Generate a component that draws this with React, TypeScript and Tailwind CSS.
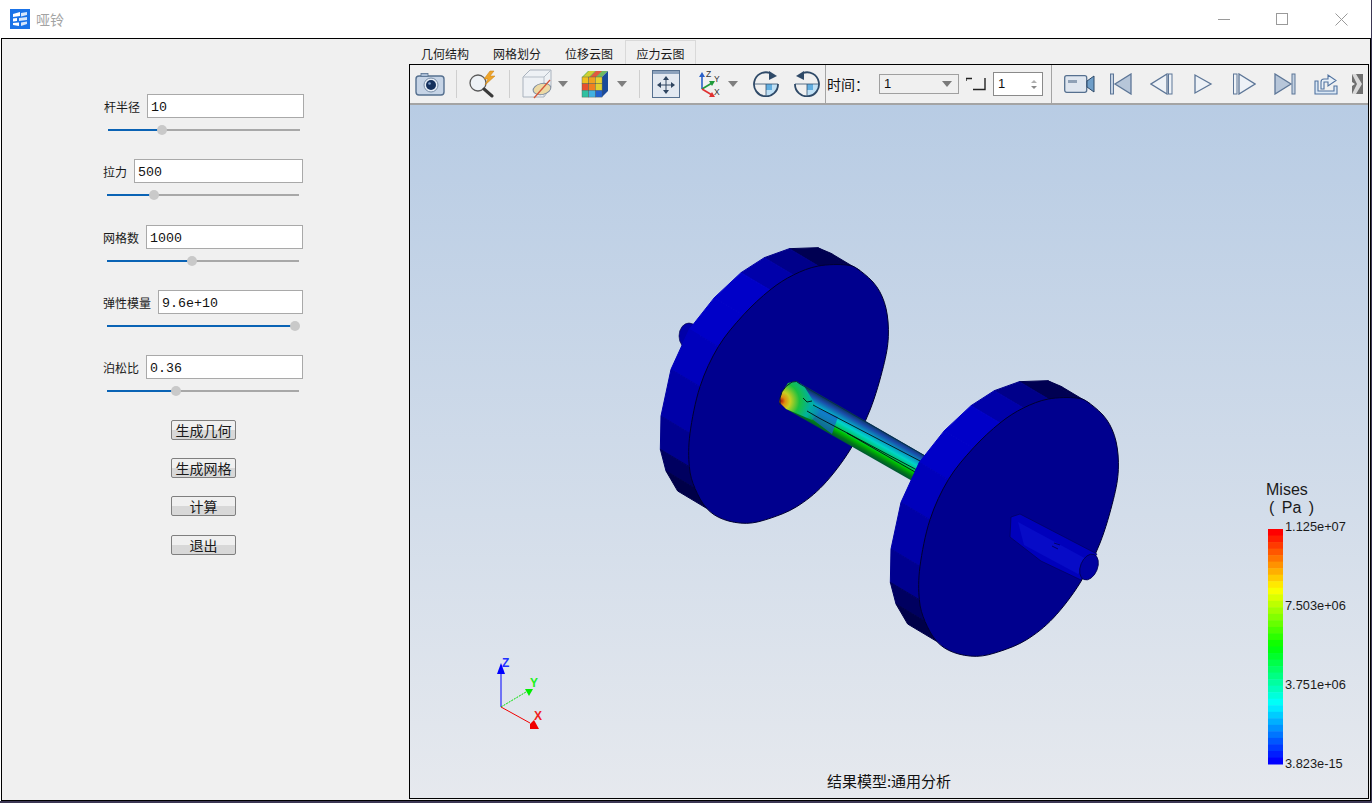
import React from "react";

const cjk = "font-['Noto_Sans_CJK_SC','Liberation_Sans',sans-serif]";

// page coords from the 3x crop of the left disc
const px = ([x, y]: number[], dx = 0, dy = 0) => [650 + x / 3 + dx, 240 + y / 3 + dy];
const z = (pts: number[][], dx = 0, dy = 0) => pts.map((p) => px(p, dx, dy).join(",")).join(" ");

// closed catmull-rom through the points, the face is rounder than its coarse outline
const smooth = (pts: number[][], dx = 0, dy = 0) => {
  const p = pts.map((q) => px(q, dx, dy));
  const n = p.length;
  let d = `M${p[0][0]} ${p[0][1]}`;
  for (let i = 0; i < n; i++) {
    const a = p[(i - 1 + n) % n];
    const b = p[i];
    const c = p[(i + 1) % n];
    const e = p[(i + 2) % n];
    d += ` C${b[0] + (c[0] - a[0]) / 6} ${b[1] + (c[1] - a[1]) / 6} ${c[0] - (e[0] - b[0]) / 6} ${c[1] - (e[1] - b[1]) / 6} ${c[0]} ${c[1]}`;
  }
  return d + "Z";
};

const front = [
  [630, 92], [680, 140], [708, 205], [715, 290], [700, 380], [660, 510], [600, 630], [520, 735],
  [440, 800], [360, 835], [290, 850], [220, 838], [170, 805], [135, 745], [118, 680], [120, 580],
  [150, 440], [205, 320], [280, 225], [360, 150], [430, 105], [505, 78], [590, 75],
];
const rim = [
  [630, 92], [590, 75], [505, 78], [430, 105], [360, 150], [280, 225], [205, 320], [150, 440],
  [120, 580], [118, 680], [135, 745], [170, 805],
];
const rimColors = [
  "#00004c", "#000052", "#00008a", "#0000aa", "#0000c8", "#0000c8", "#0000bc", "#0000a8", "#000090",
  "#000060", "#000048",
];

function Disc({ dx = 0, dy = 0 }: { dx?: number; dy?: number }) {
  return (
    <g>
      {rimColors.map((c, i) => {
        const a = rim[i];
        const b = rim[i + 1];
        const quad = [a, b, [b[0] - 87, b[1] - 52], [a[0] - 87, a[1] - 52]];
        return <polygon key={i} points={z(quad, dx, dy)} fill={c} stroke={c} strokeWidth="1" />;
      })}
      <path d={smooth(front, dx, dy)} fill="#00008e" stroke="#000030" strokeWidth="1" />
    </g>
  );
}

function jet(t: number) {
  // t 0 = red at the top, 1 = blue at the bottom
  const stops = [[255, 0, 0], [255, 255, 0], [0, 255, 0], [0, 255, 255], [0, 0, 255]];
  const p = Math.min(t * 4, 3.999);
  const i = Math.floor(p);
  const f = p - i;
  const c = stops[i].map((v, k) => Math.round(v + (stops[i + 1][k] - v) * f));
  return `rgb(${c[0]},${c[1]},${c[2]})`;
}

function Scene() {
  const bands = Array.from({ length: 36 }, (_, i) => i);
  return (
    <svg viewBox="410 105 958 693" className="absolute inset-0 h-full w-full">
      <defs>
        <linearGradient id="shaft" gradientUnits="userSpaceOnUse" x1="860" y1="418" x2="846" y2="443">
          <stop offset="0" stopColor="#0b3560" />
          <stop offset="0.14" stopColor="#1a4aa8" />
          <stop offset="0.34" stopColor="#08a0c4" />
          <stop offset="0.48" stopColor="#00d4c8" />
          <stop offset="0.62" stopColor="#00c880" />
          <stop offset="0.76" stopColor="#00c000" />
          <stop offset="0.9" stopColor="#007a18" />
          <stop offset="1" stopColor="#005a30" />
        </linearGradient>
        <radialGradient id="hot" gradientUnits="userSpaceOnUse" cx="781" cy="401" r="42">
          <stop offset="0" stopColor="#b01808" />
          <stop offset="0.1" stopColor="#e09010" />
          <stop offset="0.22" stopColor="#c8d020" />
          <stop offset="0.44" stopColor="#18c040" />
          <stop offset="0.7" stopColor="#00b0a0" />
          <stop offset="1" stopColor="#00b0a0" stopOpacity="0" />
        </radialGradient>
      </defs>

      {/* back stub of the left disc */}
      <ellipse cx="689" cy="336" rx="10" ry="13" fill="#0000a8" stroke="#000040" strokeWidth="0.6" />
      <Disc />

      {/* shaft */}
      <polygon points="800,383 926,456 914,482 786,409" fill="url(#shaft)" />
      <polygon points="806,403 838,417 832,434 812,419" fill="#1560c8" opacity="0.75" />
      <polygon points="782,392 788,383 796,381 804,386 820,412 812,420 786,409 779,402" fill="url(#hot)" />
      <path d="M780 405 Q778 390 792 382 Q797 380 800 384" fill="none" stroke="#02202a" strokeWidth="1" />
      <path d="M800 384 L925 456" fill="none" stroke="#04304a" strokeWidth="1" />
      <g fill="none" stroke="#000" strokeWidth="0.8">
        <path d="M803 398 L807 402 L812 401" />
        <path d="M813 405 L922 462" />
        <path d="M807 411 L819 418 L917 470" />
        <path d="M847 433 L915 472" />
      </g>

      <Disc dx={230} dy={133} />

      {/* stub on the right disc */}
      <polygon points="1011,517 1020,514 1097,554 1081,580 1041,561 1010,537" fill="#0000bc" stroke="#000050" strokeWidth="0.6" />
      <polygon points="1018,522 1090,561 1078,574 1024,545" fill="#0a10cc" opacity="0.7" />
      <path d="M1052 546 L1058 549 M1054 543 L1060 545" stroke="#000050" strokeWidth="0.8" />
      <ellipse cx="1089" cy="567" rx="8.5" ry="13.5" transform="rotate(22 1089 567)" fill="#0000a0" stroke="#000050" strokeWidth="0.8" />

      {/* axis triad */}
      <line x1="501" y1="707" x2="501" y2="672" stroke="#0000ff" strokeWidth="1" />
      <polygon points="501,663 505,674 497,674" fill="#0000ff" />
      <line x1="501" y1="707" x2="526" y2="692" stroke="#00e000" strokeWidth="1" strokeDasharray="2 1" />
      <polygon points="525,689 533,689 529,696" fill="#00ee00" />
      <line x1="501" y1="707" x2="530" y2="723" stroke="#f00000" strokeWidth="1" />
      <polygon points="530,724 534,720 539,729 530,729" fill="#f00000" />
      <g className="font-['Liberation_Sans',sans-serif]" fontSize="12" fontWeight="700">
        <text x="502" y="667" fill="#2030ff">Z</text>
        <text x="530" y="687" fill="#20f020">Y</text>
        <text x="534" y="720" fill="#f02020">X</text>
      </g>

      {/* legend */}
      {bands.map((i) => (
        <rect key={i} x="1268" y={529 + (i * 235) / 36} width="15" height={235 / 36 + 0.5} fill={jet(i / 35)} />
      ))}
      <g className="font-['Liberation_Sans',sans-serif]" fill="#1a1a1a">
        <text x="1266" y="495" fontSize="16">Mises</text>
        <text x="1269" y="513" fontSize="16" wordSpacing="3">( Pa )</text>
        <g fontSize="12.8">
          <text x="1285" y="531">1.125e+07</text>
          <text x="1285" y="610">7.503e+06</text>
          <text x="1285" y="689">3.751e+06</text>
          <text x="1285" y="768">3.823e-15</text>
        </g>
      </g>
    </svg>
  );
}

function Param({ label, value, pct, shift }: { label: string; value: string; pct: number; shift?: boolean }) {
  return (
    <div className={shift ? "ml-[102px] w-[200px]" : "ml-[101px] w-[200px]"}>
      <div className="flex h-6 items-center">
        <span className={`${cjk} pt-px text-[12px] text-[#1a1a1a]`}>{label}</span>
        <input
          readOnly
          value={value}
          className="ml-[7px] h-6 min-w-0 flex-1 border border-[#a9a9a9] bg-white pl-[3px] pt-[2px] font-['Liberation_Mono',monospace] text-[13.3px] text-[#111] outline-none"
        />
      </div>
      <div className="relative ml-[4px] flex h-6 w-[192px] items-center">
        <div className="h-[2px] w-full bg-[#a8a8a8]" />
        <div className="absolute left-0 h-[2px] bg-[#0a63b5]" style={{ width: `${pct}%` }} />
        <div
          className="absolute h-[10px] w-[10px] -translate-x-1/2 rounded-full bg-[#c9c9c9]"
          style={{ left: `${pct}%` }}
        />
      </div>
    </div>
  );
}

function PushButton({ label }: { label: string }) {
  return (
    <button
      className={`${cjk} h-5 w-[65px] rounded-[2px] border border-[#7f7f7f] bg-linear-to-b from-[#f0f0f0] from-50% to-[#d8d8d8] to-50% text-[14px] leading-[18px] text-[#1a1a1a]`}
    >
      {label}
    </button>
  );
}

function Sep() {
  return <div className="h-7 w-px bg-[#cfcfcf]" />;
}

function Drop({ className }: { className: string }) {
  return (
    <svg width="10" height="6" viewBox="0 0 10 6" className={className}>
      <polygon points="0,0 10,0 5,6" fill="#7f7f7f" />
    </svg>
  );
}

const blue = "#56708f";

function CameraIcon() {
  return (
    <svg width="30" height="26" viewBox="0 0 30 26">
      <rect x="1" y="5" width="28" height="19" rx="3" fill="#c6d4e6" stroke={blue} strokeWidth="1.4" />
      <rect x="6" y="2.5" width="7" height="3" fill="#a9bcd4" stroke={blue} strokeWidth="0.8" />
      <circle cx="16" cy="14" r="7" fill="#e6edf6" stroke="#7a8fa8" strokeWidth="1" />
      <circle cx="16" cy="14" r="5" fill="#14305c" />
      <circle cx="14.5" cy="12.5" r="1.3" fill="#7e9cc8" />
    </svg>
  );
}

function ZoomBoltIcon() {
  return (
    <svg width="30" height="28" viewBox="0 0 30 28">
      <circle cx="11" cy="13" r="8" fill="#eef2f6" stroke="#5a5a5a" strokeWidth="1.3" />
      <line x1="17" y1="19" x2="25" y2="26" stroke="#3a3a3a" strokeWidth="3" strokeLinecap="round" />
      <polygon points="23,1 17,9 21,9 18,15 28,6 23,6 27,1" fill="#efa52a" stroke="#c57c10" strokeWidth="0.5" />
    </svg>
  );
}

function BoxIcon() {
  return (
    <svg width="30" height="30" viewBox="0 0 30 30">
      <polygon points="1,8 8,1 29,1 29,18 22,28 1,28" fill="#eef1f5" stroke="#a9b2bd" strokeWidth="1" />
      <path d="M1 8 H22 V28 M22 8 L29 1" fill="none" stroke="#b5bdc7" strokeWidth="1" />
      <ellipse cx="20" cy="20" rx="9" ry="5.5" transform="rotate(-12 20 20)" fill="#ecd9a4" stroke="#7a8aa0" strokeWidth="1" />
      <line x1="12" y1="29" x2="28" y2="11" stroke="#d5553a" strokeWidth="1.3" />
    </svg>
  );
}

function CubeIcon() {
  const cells = ["#f0c020", "#f0a020", "#e8d030", "#e85030", "#f08020", "#e0d030", "#30c0a0", "#40b0e0", "#2060d0"];
  return (
    <svg width="28" height="28" viewBox="0 0 28 28">
      <polygon points="1,7 7,1 27,1 21,7" fill="#6fb860" />
      <polygon points="8,1 14,1 8,7 2,7" fill="#d0d030" />
      <polygon points="15,1 21,1 15,7 9,7" fill="#e05a40" />
      <polygon points="21,7 27,1 27,21 21,27" fill="#1a4a9a" />
      {cells.map((c, i) => (
        <rect key={i} x={1 + (i % 3) * 6.7} y={7 + Math.floor(i / 3) * 6.7} width="6.7" height="6.7" fill={c} stroke="#4a5a50" strokeWidth="0.4" />
      ))}
    </svg>
  );
}

function FitIcon() {
  return (
    <svg width="28" height="28" viewBox="0 0 28 28">
      <rect x="0.5" y="0.5" width="27" height="27" fill="#e3e9f1" stroke={blue} strokeWidth="1" />
      <rect x="1" y="1" width="26" height="3" fill="#8ca2bd" />
      <path d="M14 8 V22 M7 15 H21" stroke="#2f4560" strokeWidth="1" />
      <g fill="#2f4560">
        <polygon points="14,6 11,10 17,10" />
        <polygon points="14,24 11,20 17,20" />
        <polygon points="5,15 9,12 9,18" />
        <polygon points="23,15 19,12 19,18" />
      </g>
    </svg>
  );
}

function AxesIcon() {
  return (
    <svg width="24" height="30" viewBox="0 0 24 30" className="font-['Liberation_Sans',sans-serif]">
      <line x1="5" y1="20" x2="5" y2="7" stroke="#2a60c8" strokeWidth="1.6" />
      <polygon points="5,3 2,8 8,8" fill="#2a60c8" />
      <line x1="5" y1="20" x2="15" y2="14" stroke="#1f9a3a" strokeWidth="1.6" />
      <polygon points="18,12 12,12 15,17" fill="#1f9a3a" />
      <line x1="5" y1="20" x2="15" y2="26" stroke="#e03030" strokeWidth="1.6" />
      <polygon points="18,28 12,28 15,23" fill="#e03030" />
      <text x="9" y="8" fontSize="8.5" fill="#333">Z</text>
      <text x="17" y="13" fontSize="8.5" fill="#333">Y</text>
      <text x="17" y="26" fontSize="8.5" fill="#333">X</text>
    </svg>
  );
}

// the blue quadrant stays lower right, only the arrow direction changes
function RotateIcon({ flip }: { flip?: boolean }) {
  return (
    <svg width="26" height="26" viewBox="0 0 26 26">
      <path d="M13 13 H25 A12 12 0 0 1 13 25 Z" fill="#bfe0f5" />
      <path d="M13 13 H19 V19 H13 Z" fill="#62aee0" />
      <path d="M1 13 H25 M13 13 V25" stroke="#33506e" strokeWidth="0.8" fill="none" />
      <g transform={flip ? "translate(26 0) scale(-1 1)" : undefined}>
        <path d="M25 13 A12 12 0 1 1 17 2" fill="none" stroke="#2f4a68" strokeWidth="1.8" />
        <polygon points="16,0 24,5 16,9" fill="#2f4a68" />
      </g>
    </svg>
  );
}

function CornerIcon() {
  return (
    <svg width="20" height="14" viewBox="0 0 20 14">
      <path d="M0 1.5 H6 M0 1 V4 M19 1 V12.5 H7" fill="none" stroke="#222" strokeWidth="1.4" />
    </svg>
  );
}

function VideoIcon() {
  return (
    <svg width="31" height="20" viewBox="0 0 31 20">
      <rect x="0.7" y="1.7" width="22" height="16.6" rx="2" fill="#dfe6ef" stroke={blue} strokeWidth="1.3" />
      <rect x="4" y="6" width="9" height="3" fill="#8fa1b6" />
      <polygon points="23,7 30,2 30,18 23,13" fill="#6f9ec8" stroke="#2f4a68" strokeWidth="1" />
    </svg>
  );
}

function NavIcon({ kind }: { kind: "first" | "prev" | "play" | "next" | "last" }) {
  const line = "#5d7697";
  const fill = kind === "first" || kind === "last" ? "#b7c6d9" : "#eef2f7";
  return (
    <svg width="24" height="22" viewBox="0 0 24 22">
      {kind === "first" && (
        <>
          <rect x="1.5" y="1" width="3" height="20" fill="#c5d2e2" stroke={line} />
          <polygon points="22,1 22,21 6,11" fill={fill} stroke={line} strokeWidth="1.3" />
        </>
      )}
      {kind === "prev" && (
        <>
          <rect x="18.5" y="1" width="3.5" height="20" fill="#eef2f7" stroke={line} />
          <polygon points="17,1 17,21 1,11" fill={fill} stroke={line} strokeWidth="1.3" />
        </>
      )}
      {kind === "play" && <polygon points="4,2 4,20 20,11" fill={fill} stroke={line} strokeWidth="1.3" />}
      {kind === "next" && (
        <>
          <rect x="1.5" y="1" width="3.5" height="20" fill="#eef2f7" stroke={line} />
          <polygon points="7,1 7,21 23,11" fill={fill} stroke={line} strokeWidth="1.3" />
        </>
      )}
      {kind === "last" && (
        <>
          <polygon points="2,1 2,21 18,11" fill={fill} stroke={line} strokeWidth="1.3" />
          <rect x="19" y="1" width="3" height="20" fill="#c5d2e2" stroke={line} />
        </>
      )}
    </svg>
  );
}

function ExportIcon() {
  return (
    <svg width="24" height="22" viewBox="0 0 24 22">
      <path d="M1 8 H4 V18 H20 V13 H23 V21 H1 Z" fill="#dbe8f5" stroke="#5173a0" strokeWidth="1.1" />
      <path d="M7 16 V9 Q7 6 10 6 H14 V2 L22 7.5 L14 13 V9 H10 V16 Z" fill="#e8f0f8" stroke="#5173a0" strokeWidth="1.1" />
    </svg>
  );
}

function MoreIcon() {
  return (
    <svg width="11" height="20" viewBox="0 0 11 20">
      <rect width="11" height="20" fill="#6f6f6f" />
      <polygon points="0,0 4,0 10,10 4,20 0,20 5,10" fill="#d9d9d9" />
      <polygon points="0,8 3,10 0,12" fill="#f0f0f0" />
    </svg>
  );
}

export default function App() {
  const tabs = ["几何结构", "网格划分", "位移云图"];
  return (
    <div className="h-[803px] w-[1372px] overflow-hidden bg-[#3b3654]">
      <div className="flex h-[801px] w-[1371px] flex-col bg-white pl-px">
        {/* title bar */}
        <div className="flex h-[38px] items-center pl-[9px]">
          <svg width="20" height="20" viewBox="0 0 20 20">
            <rect width="20" height="20" fill="#1a73e8" />
            <path d="M3 5 L10 3 V7 L3 8 Z M3 9.5 L7 9 V12 L3 12.5 Z M3 14 L9 13.5 V17 L3 16 Z" fill="#fff" />
            <path d="M11 4 L17 3 V6 L11 7.5 Z M9 9 L17 8 V11 L9 12 Z M11 13.5 L17 12.5 V15 L11 17 Z" fill="#d6e6fb" />
          </svg>
          <span className={`${cjk} ml-[6px] text-[14px] text-[#a3a3a3]`}>哑铃</span>
          <div className="ml-auto flex items-center pr-[23px]">
            <div className="h-px w-3 bg-[#9a9a9a]" />
            <div className="ml-[46px] h-3 w-3 border border-[#9a9a9a]" />
            <svg width="13" height="13" viewBox="0 0 13 13" className="ml-[47px]">
              <path d="M0.5 0.5 L12.5 12.5 M12.5 0.5 L0.5 12.5" stroke="#9a9a9a" strokeWidth="1" />
            </svg>
          </div>
        </div>

        {/* body */}
        <div className="flex min-h-0 flex-1 border border-black bg-[#f0f0f0]">
          <div className="w-[407px] shrink-0 pt-[55px]">
            <div className="flex flex-col gap-[17px]">
              <Param label="杆半径" value="10" pct={28} shift />
              <Param label="拉力" value="500" pct={24.5} />
              <div className="mt-px">
                <Param label="网格数" value="1000" pct={44.5} />
              </div>
              <Param label="弹性模量" value="9.6e+10" pct={98} />
              <Param label="泊松比" value="0.36" pct={36} />
            </div>
            <div className="mt-[17px] flex w-[403px] flex-col items-center gap-[18px]">
              <PushButton label="生成几何" />
              <PushButton label="生成网格" />
              <PushButton label="计算" />
              <div className="mt-px flex">
                <PushButton label="退出" />
              </div>
            </div>
          </div>

          <div className="flex min-w-0 flex-1 flex-col pb-[1px] pr-[1px]">
            {/* tabs */}
            <div className={`${cjk} flex h-[25px] text-[12px] text-[#1a1a1a]`}>
              {tabs.map((t) => (
                <div key={t} className="flex w-[72px] items-center justify-center pt-[4px]">
                  {t}
                </div>
              ))}
              <div className="mt-px flex w-[71px] items-center justify-center border border-b-0 border-[#d9d9d9] bg-[#f0f0f0] pt-[3px]">
                应力云图
              </div>
            </div>

            {/* viewer */}
            <div className="flex min-h-0 flex-1 flex-col border border-black">
              <div className="flex h-[40px] shrink-0 items-center border-b-2 border-[#a4a4a4] bg-[#f0f0f0]">
                <div className="ml-[5px] flex items-center">
                  <CameraIcon />
                  <div className="ml-[11px]"><Sep /></div>
                  <div className="ml-[10px]"><ZoomBoltIcon /></div>
                  <div className="ml-[12px]"><Sep /></div>
                  <div className="ml-[12px]"><BoxIcon /></div>
                  <Drop className="ml-[6px]" />
                  <div className="ml-[13px]"><CubeIcon /></div>
                  <Drop className="ml-[8px]" />
                  <div className="ml-[12px]"><Sep /></div>
                  <div className="ml-[12px]"><FitIcon /></div>
                  <div className="ml-[17px]"><AxesIcon /></div>
                  <Drop className="ml-[7px]" />
                  <div className="ml-[15px]"><RotateIcon /></div>
                  <div className="ml-[15px]"><RotateIcon flip /></div>
                </div>
                <div className="ml-[5px] h-full w-px bg-[#a4a4a4]" />
                <span className={`${cjk} ml-[1px] w-[52px] text-[14px] text-[#111]`}>时间：</span>
                <div className="flex h-5 w-20 items-center justify-between border border-[#a0a0a0] px-[4px] font-['Liberation_Sans',sans-serif] text-[13px] text-[#111]">
                  1
                  <svg width="10" height="6" viewBox="0 0 10 6" className="mr-[2px]">
                    <polygon points="0,0 10,0 5,6" fill="#7a7a7a" />
                  </svg>
                </div>
                <div className="ml-[7px]"><CornerIcon /></div>
                <div className="ml-[7px] flex h-6 w-[50px] items-center justify-between border border-[#8a8a8a] bg-white px-[4px] font-['Liberation_Sans',sans-serif] text-[13px] text-[#111]">
                  1
                  <div className="flex flex-col gap-[3px] pr-[1px]">
                    <div className="h-0 w-0 border-x-[3px] border-b-[3px] border-x-transparent border-b-[#b0b0b0]" />
                    <div className="h-0 w-0 border-x-[3px] border-t-[3px] border-x-transparent border-t-[#8a8a8a]" />
                  </div>
                </div>
                <div className="ml-[8px] h-full w-px bg-[#a4a4a4]" />
                <div className="ml-[12px]"><VideoIcon /></div>
                <div className="ml-[14px]"><NavIcon kind="first" /></div>
                <div className="ml-[17px]"><NavIcon kind="prev" /></div>
                <div className="ml-[17px]"><NavIcon kind="play" /></div>
                <div className="ml-[17px]"><NavIcon kind="next" /></div>
                <div className="ml-[17px]"><NavIcon kind="last" /></div>
                <div className="ml-[17px]"><ExportIcon /></div>
                <div className="ml-[14px]"><MoreIcon /></div>
              </div>
              <div className="relative min-h-0 flex-1 bg-linear-to-b from-[#b8cce4] to-[#e6e9ee]">
                <Scene />
                <div className={`${cjk} absolute bottom-[6px] left-0 w-full text-center text-[15px] text-[#111]`}>
                  结果模型:通用分析
                </div>
              </div>
            </div>
          </div>
        </div>
      </div>
    </div>
  );
}
